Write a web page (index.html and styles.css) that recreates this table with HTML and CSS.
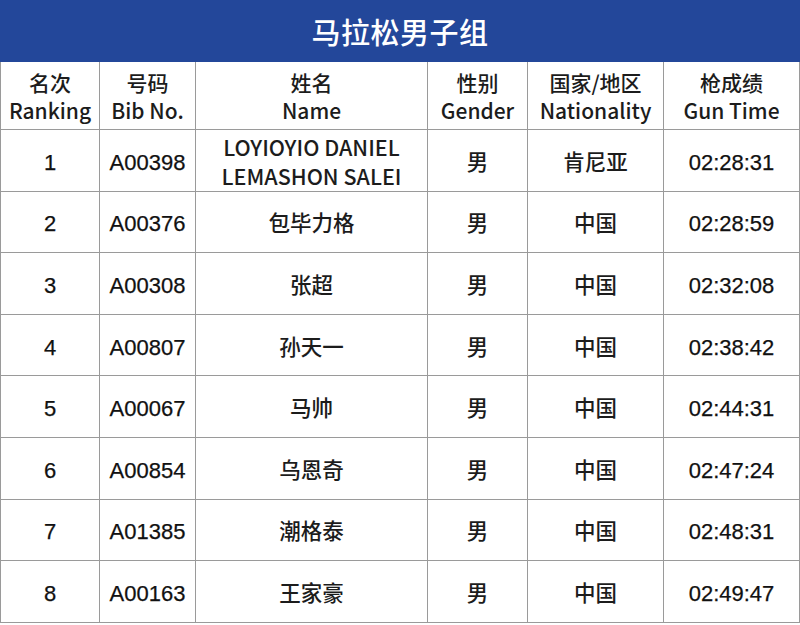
FILE: index.html
```html
<!DOCTYPE html>
<html lang="zh-CN">
<head>
<meta charset="utf-8">
<title>马拉松男子组</title>
<link rel="stylesheet" href="styles.css">
</head>
<body>
<div class="page">
  <div class="title">马拉松男子组</div>
  <div class="grid">
    <div class="cell head"><span class="zh">名次</span><span class="en">Ranking</span></div>
    <div class="cell head"><span class="zh">号码</span><span class="en">Bib No.</span></div>
    <div class="cell head"><span class="zh">姓名</span><span class="en">Name</span></div>
    <div class="cell head"><span class="zh">性别</span><span class="en">Gender</span></div>
    <div class="cell head"><span class="zh">国家/地区</span><span class="en">Nationality</span></div>
    <div class="cell head"><span class="zh">枪成绩</span><span class="en">Gun Time</span></div>

    <div class="cell num">1</div><div class="cell num">A00398</div><div class="cell zhc latin">LOYIOYIO DANIEL<br>LEMASHON SALEI</div><div class="cell zhc">男</div><div class="cell zhc">肯尼亚</div><div class="cell num">02:28:31</div>
    <div class="cell num">2</div><div class="cell num">A00376</div><div class="cell zhc">包毕力格</div><div class="cell zhc">男</div><div class="cell zhc">中国</div><div class="cell num">02:28:59</div>
    <div class="cell num">3</div><div class="cell num">A00308</div><div class="cell zhc">张超</div><div class="cell zhc">男</div><div class="cell zhc">中国</div><div class="cell num">02:32:08</div>
    <div class="cell num">4</div><div class="cell num">A00807</div><div class="cell zhc">孙天一</div><div class="cell zhc">男</div><div class="cell zhc">中国</div><div class="cell num">02:38:42</div>
    <div class="cell num">5</div><div class="cell num">A00067</div><div class="cell zhc">马帅</div><div class="cell zhc">男</div><div class="cell zhc">中国</div><div class="cell num">02:44:31</div>
    <div class="cell num">6</div><div class="cell num">A00854</div><div class="cell zhc">乌恩奇</div><div class="cell zhc">男</div><div class="cell zhc">中国</div><div class="cell num">02:47:24</div>
    <div class="cell num">7</div><div class="cell num">A01385</div><div class="cell zhc">潮格泰</div><div class="cell zhc">男</div><div class="cell zhc">中国</div><div class="cell num">02:48:31</div>
    <div class="cell num">8</div><div class="cell num">A00163</div><div class="cell zhc">王家豪</div><div class="cell zhc">男</div><div class="cell zhc">中国</div><div class="cell num">02:49:47</div>
  </div>
</div>
</body>
</html>
```

FILE: styles.css
```css
html, body {
  margin: 0;
  padding: 0;
  background: #ffffff;
}
.page {
  width: 800px;
  height: 625px;
  overflow: hidden;
  background: #ffffff;
}
.title {
  height: 62px;
  background: #23479a;
  color: #ffffff;
  font-family: "Noto Sans CJK SC", sans-serif;
  font-weight: 500;
  font-size: 29px;
  display: flex;
  align-items: center;
  justify-content: center;
  letter-spacing: 0.5px;
}
.grid {
  display: grid;
  grid-template-columns: 99px 96px 232px 100px 136px 136px;
  grid-template-rows: 68px repeat(8, 61.6px);
  border-left: 1px solid #9a9a9a;
}
.cell {
  box-sizing: border-box;
  border-right: 1px solid #9a9a9a;
  border-bottom: 1px solid #9a9a9a;
  display: flex;
  flex-direction: column;
  align-items: center;
  justify-content: center;
  text-align: center;
  color: #1c1c1c;
}
.head {
  font-family: "Noto Sans CJK SC", sans-serif;
  font-size: 21px;
  line-height: 28px;
  font-weight: 500;
}
.num {
  font-family: "Liberation Sans", Arial, sans-serif;
  font-size: 22px;
  color: #111111;
  -webkit-text-stroke: 0.25px #111111;
  padding-top: 5px;
}
.zhc {
  font-family: "Noto Sans CJK SC", sans-serif;
  font-size: 21.5px;
  font-weight: 500;
}
.latin {
  font-size: 21.5px;
  line-height: 29px;
  padding-top: 1px;
}
```
